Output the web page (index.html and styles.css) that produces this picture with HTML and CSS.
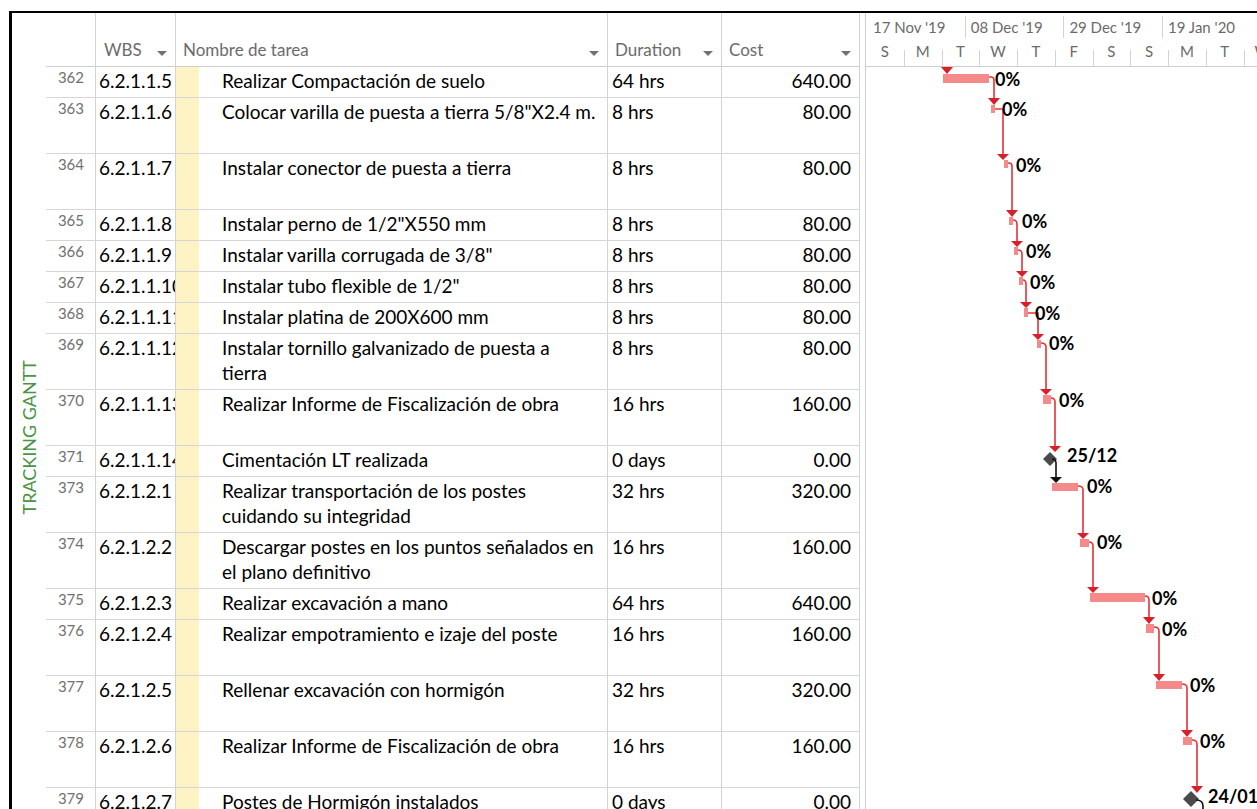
FILE: index.html
```html
<!DOCTYPE html>
<html lang="es">
<head>
<meta charset="utf-8">
<title>Tracking Gantt</title>
<link rel="stylesheet" href="styles.css">
</head>
<body>
<div class="frame">
  <div class="viewbar"><span class="viewname">TRACKING GANTT</span></div>

  <div class="sheet">
    <div class="head">
      <div class="h-num"></div>
      <div class="h-wbs"><span>WBS</span><i class="caret"></i></div>
      <div class="h-name"><span>Nombre de tarea</span><i class="caret"></i></div>
      <div><span>Duration</span><i class="caret"></i></div>
      <div><span>Cost</span><i class="caret"></i></div>
    </div>

    <div class="row"><div class="num">362</div><div class="wbs">6.2.1.1.5</div><div class="ind"></div><div class="name">Realizar Compactación de suelo</div><div class="dur">64 hrs</div><div class="cost">640.00</div></div>
    <div class="row tall"><div class="num">363</div><div class="wbs">6.2.1.1.6</div><div class="ind"></div><div class="name">Colocar varilla de puesta a tierra 5/8"X2.4 m.</div><div class="dur">8 hrs</div><div class="cost">80.00</div></div>
    <div class="row tall"><div class="num">364</div><div class="wbs">6.2.1.1.7</div><div class="ind"></div><div class="name">Instalar conector de puesta a tierra</div><div class="dur">8 hrs</div><div class="cost">80.00</div></div>
    <div class="row"><div class="num">365</div><div class="wbs">6.2.1.1.8</div><div class="ind"></div><div class="name">Instalar perno de 1/2"X550 mm</div><div class="dur">8 hrs</div><div class="cost">80.00</div></div>
    <div class="row"><div class="num">366</div><div class="wbs">6.2.1.1.9</div><div class="ind"></div><div class="name">Instalar varilla corrugada de 3/8"</div><div class="dur">8 hrs</div><div class="cost">80.00</div></div>
    <div class="row"><div class="num">367</div><div class="wbs">6.2.1.1.10</div><div class="ind"></div><div class="name">Instalar tubo flexible de 1/2"</div><div class="dur">8 hrs</div><div class="cost">80.00</div></div>
    <div class="row"><div class="num">368</div><div class="wbs">6.2.1.1.11</div><div class="ind"></div><div class="name">Instalar platina de 200X600 mm</div><div class="dur">8 hrs</div><div class="cost">80.00</div></div>
    <div class="row tall"><div class="num">369</div><div class="wbs">6.2.1.1.12</div><div class="ind"></div><div class="name">Instalar tornillo galvanizado de puesta a<br>tierra</div><div class="dur">8 hrs</div><div class="cost">80.00</div></div>
    <div class="row tall"><div class="num">370</div><div class="wbs">6.2.1.1.13</div><div class="ind"></div><div class="name">Realizar Informe de Fiscalización de obra</div><div class="dur">16 hrs</div><div class="cost">160.00</div></div>
    <div class="row"><div class="num">371</div><div class="wbs">6.2.1.1.14</div><div class="ind"></div><div class="name">Cimentación LT realizada</div><div class="dur">0 days</div><div class="cost">0.00</div></div>
    <div class="row tall"><div class="num">373</div><div class="wbs">6.2.1.2.1</div><div class="ind"></div><div class="name">Realizar transportación de los postes<br>cuidando su integridad</div><div class="dur">32 hrs</div><div class="cost">320.00</div></div>
    <div class="row tall"><div class="num">374</div><div class="wbs">6.2.1.2.2</div><div class="ind"></div><div class="name">Descargar postes en los puntos señalados en<br>el plano definitivo</div><div class="dur">16 hrs</div><div class="cost">160.00</div></div>
    <div class="row"><div class="num">375</div><div class="wbs">6.2.1.2.3</div><div class="ind"></div><div class="name">Realizar excavación a mano</div><div class="dur">64 hrs</div><div class="cost">640.00</div></div>
    <div class="row tall"><div class="num">376</div><div class="wbs">6.2.1.2.4</div><div class="ind"></div><div class="name">Realizar empotramiento e izaje del poste</div><div class="dur">16 hrs</div><div class="cost">160.00</div></div>
    <div class="row tall"><div class="num">377</div><div class="wbs">6.2.1.2.5</div><div class="ind"></div><div class="name">Rellenar excavación con hormigón</div><div class="dur">32 hrs</div><div class="cost">320.00</div></div>
    <div class="row tall"><div class="num">378</div><div class="wbs">6.2.1.2.6</div><div class="ind"></div><div class="name">Realizar Informe de Fiscalización de obra</div><div class="dur">16 hrs</div><div class="cost">160.00</div></div>
    <div class="row"><div class="num">379</div><div class="wbs">6.2.1.2.7</div><div class="ind"></div><div class="name">Postes de Hormigón instalados</div><div class="dur">0 days</div><div class="cost">0.00</div></div>
  </div>

  <div class="split"></div>

  <div class="chart">
    <div class="scale">
      <div class="tier-top">
        <div class="unit">17 Nov '19</div>
        <div class="unit">08 Dec '19</div>
        <div class="unit">29 Dec '19</div>
        <div class="unit">19 Jan '20</div>
        <div class="unit">09 Feb '20</div>
      </div>
      <div class="tier-bot">
        <div class="day">S</div>
        <div class="day">M</div>
        <div class="day">T</div>
        <div class="day">W</div>
        <div class="day">T</div>
        <div class="day">F</div>
        <div class="day">S</div>
        <div class="day">S</div>
        <div class="day">M</div>
        <div class="day">T</div>
        <div class="day">W</div>
      </div>
    </div>
    <div class="chart-body">
      <svg class="bars" width="391" height="742" viewBox="866 67 391 742" xmlns="http://www.w3.org/2000/svg">
        <!-- task bars -->
        <g class="task">
          <rect x="943" y="74" width="46" height="9"/>
          <rect x="991" y="105" width="4" height="8"/>
          <rect x="1004" y="160" width="4" height="8"/>
          <rect x="1009" y="217" width="4" height="8"/>
          <rect x="1014" y="247" width="4" height="8"/>
          <rect x="1019" y="277" width="4" height="8"/>
          <rect x="1024" y="308" width="4" height="9"/>
          <rect x="1037" y="340" width="4" height="8"/>
          <rect x="1043" y="395" width="8" height="9"/>
          <rect x="1052" y="483" width="26" height="8"/>
          <rect x="1080" y="539" width="9" height="8"/>
          <rect x="1090" y="593" width="55" height="9"/>
          <rect x="1146" y="624" width="8" height="9"/>
          <rect x="1156" y="681" width="26" height="8"/>
          <rect x="1183" y="737" width="9" height="8"/>
        </g>

        <!-- finish-to-start links -->
        <g class="link">
          <path d="M989,77 H991 Q994,77 994,80 V99"/>
          <path d="M995,109 H1003 V155"/>
          <path d="M1008,163 H1009 Q1012,163 1012,166 V211"/>
          <path d="M1013,220 Q1017,220 1017,224 V242"/>
          <path d="M1018,250 Q1022,250 1022,254 V272"/>
          <path d="M1023,280 Q1026,280 1026,284 V303"/>
          <path d="M1028,313 H1038 V335"/>
          <path d="M1041,343 Q1046,343 1046,347 V390"/>
          <path d="M1051,398 Q1055,398 1055,402 V447"/>
          <path d="M1078,486 Q1083,486 1083,490 V534"/>
          <path d="M1089,542 Q1093,542 1093,546 V588"/>
          <path d="M1145,596 Q1149,596 1149,600 V618"/>
          <path d="M1154,627 Q1159,627 1159,631 V675"/>
          <path d="M1182,684 Q1187,684 1187,688 V731"/>
          <path d="M1192,740 Q1197,740 1197,744 V787"/>
        </g>
        <g class="head-red">
          <polygon points="941,67 953,67 947,74"/>
          <polygon points="988,98 1000,98 994,105"/>
          <polygon points="997,154 1009,154 1003,160"/>
          <polygon points="1006,210 1018,210 1012,217"/>
          <polygon points="1011,241 1023,241 1017,247"/>
          <polygon points="1016,271 1028,271 1022,277"/>
          <polygon points="1020,302 1032,302 1026,308"/>
          <polygon points="1032,334 1044,334 1038,340"/>
          <polygon points="1040,389 1052,389 1046,395"/>
          <polygon points="1049,446 1061,446 1055,452"/>
          <polygon points="1077,533 1089,533 1083,539"/>
          <polygon points="1087,587 1099,587 1093,593"/>
          <polygon points="1143,617 1155,617 1149,624"/>
          <polygon points="1153,674 1165,674 1159,681"/>
          <polygon points="1181,730 1193,730 1187,737"/>
          <polygon points="1191,786 1203,786 1197,793"/>
        </g>

        <!-- milestones -->
        <g class="milestone">
          <polygon points="1050,452 1057,459 1050,466 1043,459"/>
          <polygon points="1191,791 1199,799 1191,807 1183,799"/>
        </g>
        <g class="link-dark">
          <path d="M1052,459 Q1056,459 1056,463 V478"/>
          <path d="M1196,800 Q1203,800 1203,806 V812"/>
        </g>
        <polygon class="head-dark" points="1050,477 1062,477 1056,483"/>

        <!-- progress and date labels -->
        <g class="label">
          <text x="995" y="86">0%</text>
          <text x="1002" y="116">0%</text>
          <text x="1016" y="172">0%</text>
          <text x="1022" y="228">0%</text>
          <text x="1026" y="258">0%</text>
          <text x="1030" y="289">0%</text>
          <text x="1035" y="320">0%</text>
          <text x="1049" y="350">0%</text>
          <text x="1059" y="407">0%</text>
          <text x="1067" y="462">25/12</text>
          <text x="1087" y="493">0%</text>
          <text x="1097" y="549">0%</text>
          <text x="1152" y="605">0%</text>
          <text x="1162" y="636">0%</text>
          <text x="1190" y="692">0%</text>
          <text x="1200" y="748">0%</text>
          <text x="1208" y="803">24/01</text>
        </g>
      </svg>
    </div>
  </div>
</div>
</body>
</html>
```

FILE: styles.css
```css
* {
  box-sizing: border-box;
}

html,
body {
  margin: 0;
  padding: 0;
}

body {
  width: 1257px;
  height: 809px;
  overflow: hidden;
  background: #fff;
  font-family: Lato, "Open Sans", sans-serif;
}

/* outer view frame */
.frame {
  display: flex;
  height: 820px;
  margin: 11px 0 0 9px;
  border-top: 2px solid #000;
  border-left: 3px solid #000;
}

/* vertical view name bar */
.viewbar {
  flex: none;
  width: 34px;
  display: flex;
  justify-content: center;
  padding-top: 347px;
}

.viewname {
  align-self: flex-start;
  writing-mode: vertical-rl;
  transform: rotate(180deg);
  font-size: 18px;
  line-height: 20px;
  color: #4a9444;
  white-space: nowrap;
}

/* task sheet */
.sheet {
  flex: none;
  width: 814px;
}

.head,
.row {
  display: grid;
  grid-template-columns: 50px 80px 23px 409px 114px 138px;
}

.head {
  height: 54px;
  border-bottom: 1px solid #cdcdcd;
}

.head > div {
  display: flex;
  align-items: flex-end;
  justify-content: space-between;
  padding: 0 8px 6px 7px;
  border-right: 1px solid #d3d3d3;
  font-size: 17px;
  line-height: 20px;
  color: #6b6b6b;
}

.head > .h-wbs {
  padding-left: 8px;
}

.head > .h-name {
  grid-column: span 2;
}

.caret {
  width: 0;
  height: 0;
  margin-bottom: 4px;
  border-left: 5px solid transparent;
  border-right: 5px solid transparent;
  border-top: 5px solid #727272;
}

.row {
  height: 31px;
  border-bottom: 1px solid #d6d6d6;
}

.row.tall {
  height: 56px;
}

.row > div {
  overflow: hidden;
  white-space: nowrap;
  padding-top: 1px;
  border-right: 1px solid #d3d3d3;
  font-size: 19px;
  line-height: 25px;
  color: #000;
}

.row > .num {
  padding-top: 0;
  padding-right: 11px;
  text-align: right;
  font-size: 15px;
  line-height: 21px;
  color: #707070;
}

.row > .wbs {
  padding-left: 3px;
}

.row > .ind {
  background: #fef3c4;
  border-right: 0;
}

.row > .name {
  padding-left: 23px;
}

.row > .dur {
  padding-left: 4px;
}

.row > .cost {
  padding-right: 8px;
  text-align: right;
}

.split {
  flex: none;
  width: 5px;
}

/* gantt chart pane */
.chart {
  flex: 1;
  min-width: 0;
  display: flex;
  flex-direction: column;
  overflow: hidden;
  border-left: 1px solid #cdcdcd;
}

.scale {
  flex: none;
  height: 54px;
  overflow: hidden;
  border-bottom: 1px solid #cdcdcd;
  font-size: 15px;
  color: #6b6b6b;
}

.tier-top {
  display: flex;
  height: 25px;
  padding-top: 3px;
  white-space: nowrap;
}

.unit {
  flex: none;
  width: 98.7px;
  height: 22px;
  padding-left: 7px;
  line-height: 22px;
}

.unit + .unit {
  padding-left: 5px;
  border-left: 1px solid #d3d3d3;
}

.tier-bot {
  display: flex;
  height: 28px;
}

.day {
  position: relative;
  flex: none;
  width: 37.75px;
  padding-top: 3px;
  line-height: 20px;
  text-align: center;
}

.day + .day::before {
  content: "";
  position: absolute;
  left: 0;
  bottom: 0;
  height: 16px;
  border-left: 1px solid #d3d3d3;
}

.chart-body {
  position: relative;
  flex: 1;
}

.bars {
  position: absolute;
  left: 0;
  top: 0;
  overflow: visible;
}

.task rect {
  fill: #f58a8b;
}

.link path {
  fill: none;
  stroke: #e2343a;
  stroke-width: 1.6;
}

.head-red polygon {
  fill: #d9202a;
}

.milestone polygon {
  fill: #4a4a4a;
}

.link-dark path {
  fill: none;
  stroke: #111;
  stroke-width: 1.6;
}

.head-dark {
  fill: #111;
}

.label text {
  font-family: Lato, "Open Sans", sans-serif;
  font-size: 18px;
  font-weight: 700;
  fill: #000;
}
```
